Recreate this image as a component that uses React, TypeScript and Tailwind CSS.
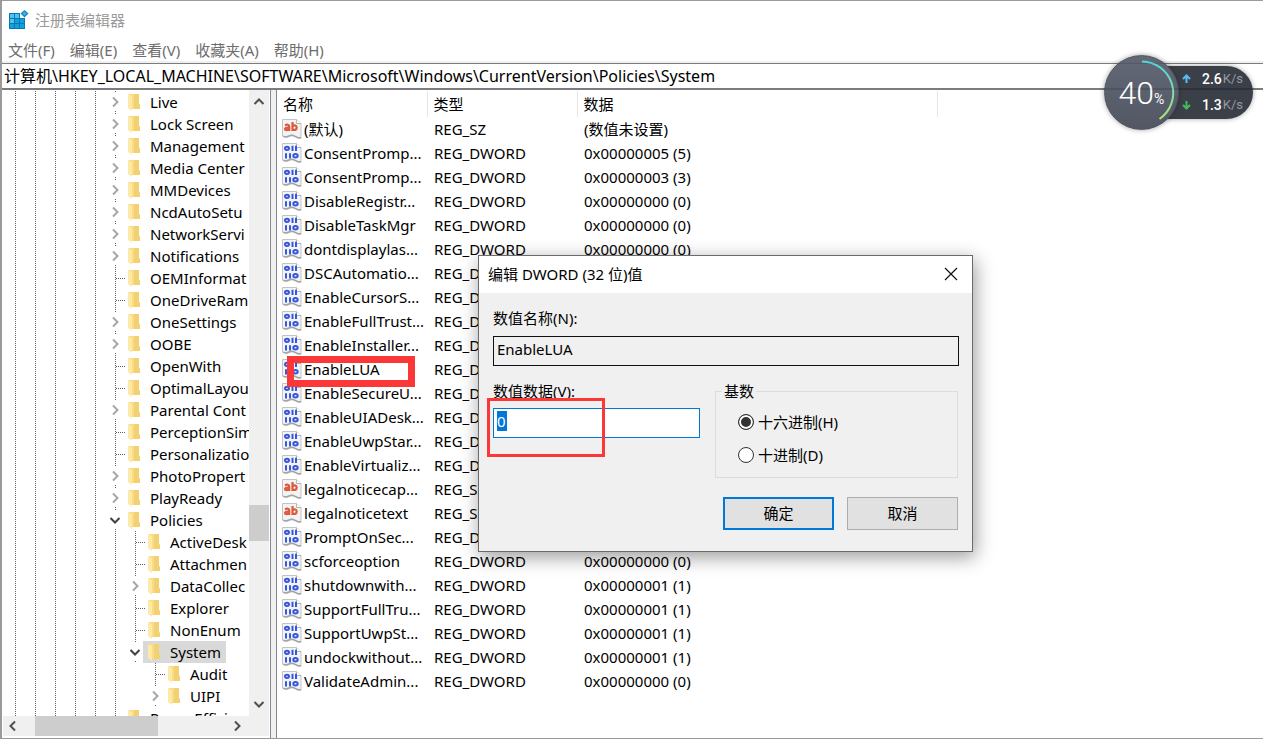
import { useId } from "react";

type TreeItem = {
  name: string;
  level: number;
  state?: "closed" | "open";
  selected?: boolean;
};

type RegistryValue = {
  name: string;
  type: "REG_SZ" | "REG_DWORD";
  data: string;
};

const treeItems: TreeItem[] = [
  { name: "Live", level: 5, state: "closed" },
  { name: "Lock Screen", level: 5, state: "closed" },
  { name: "Management", level: 5, state: "closed" },
  { name: "Media Center", level: 5, state: "closed" },
  { name: "MMDevices", level: 5, state: "closed" },
  { name: "NcdAutoSetu", level: 5, state: "closed" },
  { name: "NetworkServi", level: 5, state: "closed" },
  { name: "Notifications", level: 5, state: "closed" },
  { name: "OEMInformat", level: 5 },
  { name: "OneDriveRam", level: 5 },
  { name: "OneSettings", level: 5, state: "closed" },
  { name: "OOBE", level: 5, state: "closed" },
  { name: "OpenWith", level: 5 },
  { name: "OptimalLayou", level: 5 },
  { name: "Parental Cont", level: 5, state: "closed" },
  { name: "PerceptionSim", level: 5 },
  { name: "Personalizatio", level: 5 },
  { name: "PhotoPropert", level: 5, state: "closed" },
  { name: "PlayReady", level: 5, state: "closed" },
  { name: "Policies", level: 5, state: "open" },
  { name: "ActiveDesk", level: 6 },
  { name: "Attachmen", level: 6 },
  { name: "DataCollec", level: 6, state: "closed" },
  { name: "Explorer", level: 6 },
  { name: "NonEnum", level: 6 },
  { name: "System", level: 6, state: "open", selected: true },
  { name: "Audit", level: 7 },
  { name: "UIPI", level: 7, state: "closed" },
  { name: "PowerEfficie", level: 5 },
];

const values: RegistryValue[] = [
  { name: "(默认)", type: "REG_SZ", data: "(数值未设置)" },
  { name: "ConsentPromp...", type: "REG_DWORD", data: "0x00000005 (5)" },
  { name: "ConsentPromp...", type: "REG_DWORD", data: "0x00000003 (3)" },
  { name: "DisableRegistr...", type: "REG_DWORD", data: "0x00000000 (0)" },
  { name: "DisableTaskMgr", type: "REG_DWORD", data: "0x00000000 (0)" },
  { name: "dontdisplaylas...", type: "REG_DWORD", data: "0x00000000 (0)" },
  { name: "DSCAutomatio...", type: "REG_DWORD", data: "" },
  { name: "EnableCursorS...", type: "REG_DWORD", data: "" },
  { name: "EnableFullTrust...", type: "REG_DWORD", data: "" },
  { name: "EnableInstaller...", type: "REG_DWORD", data: "" },
  { name: "EnableLUA", type: "REG_DWORD", data: "" },
  { name: "EnableSecureU...", type: "REG_DWORD", data: "" },
  { name: "EnableUIADesk...", type: "REG_DWORD", data: "" },
  { name: "EnableUwpStar...", type: "REG_DWORD", data: "" },
  { name: "EnableVirtualiz...", type: "REG_DWORD", data: "" },
  { name: "legalnoticecap...", type: "REG_SZ", data: "" },
  { name: "legalnoticetext", type: "REG_SZ", data: "" },
  { name: "PromptOnSec...", type: "REG_DWORD", data: "" },
  { name: "scforceoption", type: "REG_DWORD", data: "0x00000000 (0)" },
  { name: "shutdownwith...", type: "REG_DWORD", data: "0x00000001 (1)" },
  { name: "SupportFullTru...", type: "REG_DWORD", data: "0x00000001 (1)" },
  { name: "SupportUwpSt...", type: "REG_DWORD", data: "0x00000001 (1)" },
  { name: "undockwithout...", type: "REG_DWORD", data: "0x00000001 (1)" },
  { name: "ValidateAdmin...", type: "REG_DWORD", data: "0x00000000 (0)" },
];

const menus = ["文件(F)", "编辑(E)", "查看(V)", "收藏夹(A)", "帮助(H)"];

function RegeditIcon() {
  return (
    <svg width="20" height="20" viewBox="0 0 20 20" aria-hidden="true">
      <path d="M0 3h11v5h5v11H0z" fill="#0878b4" />
      <path d="M1 4h4v4H1zM6 4h4v4H6zM1 9h4v4H1z" fill="#4cc4ee" />
      <path d="M6 9h4v4H6zM1 14h4v4H1zM6 14h4v4H6zM11 9h4v4h-4zM11 14h4v4h-4z" fill="#12a0dc" />
      <path d="M15.500 0l4 3.600-4 3.900-4-3.900z" fill="#1587c4" />
      <path d="M15.500 1.500l2.200 2-2.200 2-2.200-2z" fill="#3fb0e0" />
    </svg>
  );
}

function FolderIcon() {
  return (
    <svg width="13" height="18" viewBox="0 0 13 18" className="shrink-0" aria-hidden="true">
      <path d="M1 1h10v10l1 1v4H1z" fill="#f9dc86" />
      <path d="M6 1h5v10l1 1v4H6z" fill="#f3d070" />
      <path d="M0 1l4 2v15l-4-3z" fill="#ffe9a6" />
    </svg>
  );
}

function ValueIcon({ type }: { type: RegistryValue["type"] }) {
  return (
    <svg width="20" height="20" viewBox="0 0 20 20" className="shrink-0" aria-hidden="true">
      <path
        d="M.5.500h14l4.500 4v14.500c-3 .800-4-.500-6-1.500s-4-1-6 0-4.500 1-6.500-.500z"
        fill="#f3f3f6"
        stroke="#c4c4c4"
      />
      <path d="M1 17c2 1.500 4 1 6 0s4-1 6 .300 3 2 6 1.400" fill="none" stroke="#a4a4a4" strokeWidth="1.500" />
      <path d="M14.500.5v4H19" fill="#fff" stroke="#b4b4b4" />
      {type === "REG_SZ" ? (
        <g fill="none" stroke="#dc5a38" strokeWidth="2.200">
          <path d="M3 6.200c2-.9 4.200-.6 4.200 1.300V12M7.200 8.600c-2.800-.2-4.200.2-4.200 1.500s2.600 1.500 4.200-.3" />
          <path d="M10.500 3v9M10.500 7.500c1.500-1.800 4.200-1.300 4.200 1.100s-2.700 3.200-4.200 1.400" />
        </g>
      ) : (
        <g fill="none" stroke="#3558dc" strokeWidth="2">
          <ellipse cx="5" cy="5.300" rx="2" ry="1.600" />
          <path d="M10.500 2.700v5.200M14 2.700v5.200M4 10.200v5.300M8 10.200v5.300" />
          <ellipse cx="13.500" cy="12.800" rx="2.200" ry="1.700" />
        </g>
      )}
    </svg>
  );
}

function Chevron({ direction, color = "#505050" }: { direction: "up" | "down" | "left" | "right"; color?: string }) {
  const paths = {
    up: "M1.500 8l4.500-4.500L10.500 8",
    down: "M1.500 4l4.500 4.500L10.500 4",
    left: "M8 1.500L3.500 6 8 10.500",
    right: "M4 1.500L8.500 6 4 10.500",
  };
  return (
    <svg width="12" height="12" viewBox="0 0 12 12" aria-hidden="true">
      <path d={paths[direction]} fill="none" stroke={color} strokeWidth="2" />
    </svg>
  );
}

/** One 20px indent column of the tree, with its dotted guide line. */
function Guide({ line = "full" }: { line?: "full" | "branch" | "ends" | "none" }) {
  return (
    <svg width="20" height="22" viewBox="0 0 20 22" className="shrink-0" aria-hidden="true">
      <g stroke="#606060" strokeDasharray="1 1" fill="none">
        {(line === "full" || line === "branch") && <path d="M10.500 0v22" />}
        {line === "branch" && <path d="M11 11.500h9" />}
        {line === "ends" && <path d="M10.500 0v2M10.500 20v2" />}
      </g>
    </svg>
  );
}

function TreeRow({ item }: { item: TreeItem }) {
  const indent = Array.from({ length: item.level }, (_, i) => i);
  return (
    <li className="flex h-[22px] items-center whitespace-nowrap">
      {indent.map((i) => (
        <Guide key={i} line={i === 6 ? "none" : "full"} />
      ))}
      {item.state ? (
        <span className="relative flex h-[22px] w-5 shrink-0 items-center justify-center">
          <span className="absolute inset-0">
            <Guide line="ends" />
          </span>
          <Chevron
            direction={item.state === "open" ? "down" : "right"}
            color={item.state === "open" ? "#404040" : "#a6a6a6"}
          />
        </span>
      ) : (
        <Guide line="branch" />
      )}
      <span className={`-ml-[2px] flex h-[22px] items-center gap-[9px] px-[5px] ${item.selected ? "bg-[#d9d9d9]" : ""}`}>
        <FolderIcon />
        {item.name}
      </span>
    </li>
  );
}

function KeyTree() {
  return (
    <nav className="flex w-[269px] shrink-0 flex-col border-r border-[#828790] pr-px pb-[2px] pl-px" aria-label="注册表项">
      <div className="flex min-h-0 flex-1">
        <ul className="min-w-0 flex-1 overflow-hidden pt-px pl-[2px]">
          {treeItems.map((item) => (
            <TreeRow key={item.name} item={item} />
          ))}
        </ul>
        <div className="flex w-5 flex-col items-center bg-[#f0f0f0]">
          <button type="button" aria-label="向上" className="flex h-6 items-center">
            <Chevron direction="up" />
          </button>
          <div className="flex-[392]" />
          <div className="h-9 w-full bg-[#cdcdcd]" />
          <div className="flex-[151]" />
          <button type="button" aria-label="向下" className="flex h-6 items-center">
            <Chevron direction="down" />
          </button>
        </div>
      </div>
      <div className="flex h-5 items-center bg-[#f0f0f0] pr-5">
        <button type="button" aria-label="向左" className="flex w-8 pl-1">
          <Chevron direction="left" />
        </button>
        <div className="h-5 w-[123px] bg-[#cdcdcd]" />
        <div className="flex-1" />
        <button type="button" aria-label="向右" className="flex w-[18px]">
          <Chevron direction="right" />
        </button>
      </div>
    </nav>
  );
}

function ValueTable() {
  return (
    <main className="min-w-0 flex-1 border-l border-[#828790] pt-px">
      <table className="w-[660px] table-fixed border-collapse text-left">
        <colgroup>
          <col className="w-[150px]" />
          <col className="w-[150px]" />
          <col className="w-[360px]" />
        </colgroup>
        <thead>
          <tr className="h-[26px]">
            {["名称", "类型", "数据"].map((title) => (
              <th key={title} className="border-r border-[#e5e5e5] p-0 pl-[6px] font-normal">
                {title}
              </th>
            ))}
          </tr>
        </thead>
        <tbody>
          {values.map((value, index) => (
            <tr key={index} className="h-6 whitespace-nowrap">
              <td className="p-0 pl-[5px]">
                <span className="flex items-center gap-[2px]">
                  <ValueIcon type={value.type} />
                  {value.name}
                </span>
              </td>
              <td className="p-0 pl-[7px]">{value.type}</td>
              <td className="p-0 pl-[7px]">{value.data}</td>
            </tr>
          ))}
        </tbody>
      </table>
    </main>
  );
}

function RadixOption({ label, checked }: { label: string; checked?: boolean }) {
  return (
    <label className="flex items-center gap-1">
      <input
        type="radio"
        name="radix"
        defaultChecked={checked}
        className="size-4 appearance-none rounded-full border border-[#333] bg-white checked:bg-[#333] checked:shadow-[inset_0_0_0_2px_#fff]"
      />
      {label}
    </label>
  );
}

function EditDialog() {
  const nameId = useId();
  const dataId = useId();
  return (
    <section
      role="dialog"
      aria-label="编辑 DWORD (32 位)值"
      className="absolute top-[254px] left-[476px] w-[495px] border border-[#6b6b6b] bg-[#f0f0f0] shadow-[2px_5px_18px_rgba(0,0,0,0.4)]"
    >
      <header className="flex h-[37px] items-center justify-between bg-white pr-[14px] pb-px pl-[9px]">
        <h2>编辑 DWORD (32 位)值</h2>
        <button type="button" aria-label="关闭">
          <svg width="14" height="14" viewBox="0 0 14 14" fill="none" stroke="#111" strokeWidth="1.200">
            <path d="M1 1l12 12M13 1L1 13" />
          </svg>
        </button>
      </header>
      <form className="pt-[15px] pr-[13px] pb-[21px] pl-[14px]" onSubmit={(e) => e.preventDefault()}>
        <label htmlFor={nameId} className="block h-7">
          数值名称(N):
        </label>
        <input
          id={nameId}
          readOnly
          defaultValue="EnableLUA"
          className="block h-[30px] w-full border border-[#111] px-[3px] pb-1 outline-none"
        />
        <div className="mt-[15px] flex justify-between pr-px">
          <div className="w-[207px]">
            <label htmlFor={dataId} className="block h-[27px]">
              数值数据(V):
            </label>
            <div className="flex h-[30px] items-center border border-[#0078d7] bg-white pb-1 pl-[3px]">
              <input
                id={dataId}
                defaultValue="0"
                className="h-5 w-[10px] bg-[#0078d7] text-white outline-none"
              />
            </div>
          </div>
          <fieldset className="h-[97px] w-[243px] border border-[#dcdcdc] px-[22px]">
            <legend className="-ml-4 px-[2px]">基数</legend>
            <div className="flex flex-col gap-[13px] pt-[11px]">
              <RadixOption label="十六进制(H)" checked />
              <RadixOption label="十进制(D)" />
            </div>
          </fieldset>
        </div>
        <div className="mt-[19px] flex justify-end gap-[13px] pr-px">
          <button type="submit" className="h-[33px] w-[111px] border-2 border-[#0078d7] bg-[#e1e1e1] pb-[2px]">
            确定
          </button>
          <button type="button" className="h-[33px] w-[111px] border border-[#adadad] bg-[#e1e1e1] pb-[2px]">
            取消
          </button>
        </div>
      </form>
    </section>
  );
}

function SpeedRow({ arrow, value }: { arrow: "up" | "down"; value: string }) {
  return (
    <div className="flex h-[26px] items-center">
      <svg width="9" height="10" viewBox="0 0 9 10" fill="none" stroke={arrow === "up" ? "#4ab4f0" : "#2fb44a"} strokeWidth="2">
        <path d={arrow === "up" ? "M4.500 9V2M1 5l3.500-3.500L8 5" : "M4.500 1v7M1 5l3.500 3.500L8 5"} />
      </svg>
      <span className="w-[31px] text-right text-sm font-medium text-white">{value}</span>
      <span className="pl-px text-[13px] text-[#8a8e98]">K/s</span>
    </div>
  );
}

function SpeedWidget() {
  return (
    <aside className="absolute top-[54px] right-[10px] flex h-[75px] items-center font-['Roboto','Noto_Sans',sans-serif] opacity-90">
      <div className="relative z-10 flex size-[75px] items-center justify-center rounded-full border border-[#3b404a] bg-linear-to-b from-[#525968] to-[#404653] text-white shadow-[0_0_5px_rgba(0,0,0,0.4)]">
        <svg className="absolute inset-0" width="73" height="73" viewBox="0 0 73 73" fill="none">
          <defs>
            <linearGradient id="arc" x1="0" y1="0" x2="0" y2="1">
              <stop offset="0" stopColor="#3fd6d6" />
              <stop offset="1" stopColor="#a3dc6c" />
            </linearGradient>
          </defs>
          <path d="M37 5.500A31.500 31.500 0 0 1 54.500 63" stroke="url(#arc)" strokeWidth="2" />
        </svg>
        <span className="text-[32px] leading-none font-light">40</span>
        <span className="self-end pb-[23px] text-sm leading-none">%</span>
      </div>
      <div className="-ml-4 h-[53px] rounded-r-full bg-[#262b35] pr-[10px] pl-[19px] shadow-[0_0_5px_rgba(0,0,0,0.4)]">
        <SpeedRow arrow="up" value="2.6" />
        <SpeedRow arrow="down" value="1.3" />
      </div>
    </aside>
  );
}

export default function App() {
  return (
    <div className="relative flex h-screen flex-col overflow-hidden border-t border-b border-l-2 border-[#9a9a9a] bg-white font-['Noto_Sans','Noto_Sans_CJK_SC',sans-serif] text-[15px] leading-5 text-black">
      <header className="flex h-[37px] items-center gap-[6px] pl-[7px] text-[#999]">
        <RegeditIcon />
        <h1>注册表编辑器</h1>
      </header>
      <div className="flex h-[25px] items-center gap-[15px] border-b-2 border-[#f0f0f0] pl-[6px] text-[#6d6d6d]">
        {menus.map((menu) => (
          <button key={menu} type="button">
            {menu}
          </button>
        ))}
      </div>
      <input
        aria-label="地址"
        readOnly
        defaultValue="计算机\HKEY_LOCAL_MACHINE\SOFTWARE\Microsoft\Windows\CurrentVersion\Policies\System"
        className="h-[27px] w-full shrink-0 border-t border-b-2 border-[#7c7c80] px-[2px] pb-[2px] text-base outline-none"
      />
      <div className="flex min-h-0 flex-1">
        <KeyTree />
        <div className="w-[5px] shrink-0 bg-[#f0f0f0]" />
        <ValueTable />
      </div>
      {/* callouts */}
      <div className="pointer-events-none absolute top-[355px] left-[285px] h-[31px] w-32 border-[7px] border-[#fc3737]" />
      <EditDialog />
      <div className="pointer-events-none absolute top-[397px] left-[485px] h-[59px] w-[118px] border-3 border-[#fc3737]" />
      <SpeedWidget />
    </div>
  );
}
